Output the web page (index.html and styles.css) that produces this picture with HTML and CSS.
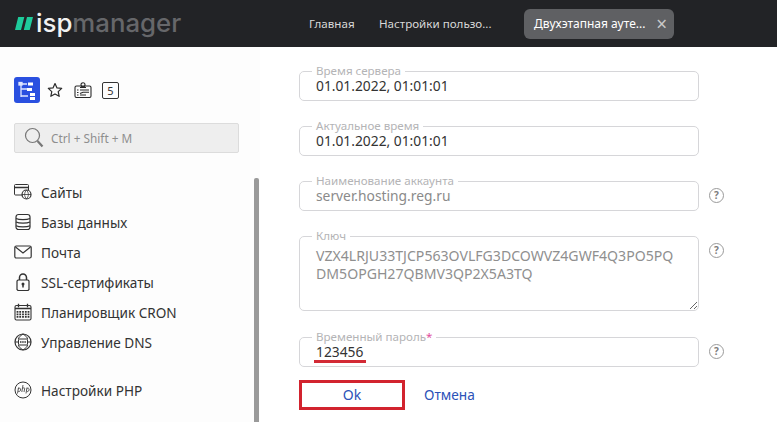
FILE: index.html
```html
<!DOCTYPE html>
<html lang="ru">
<head>
<meta charset="utf-8">
<title>ispmanager</title>
<link rel="stylesheet" href="styles.css">
</head>
<body>
<header class="topbar">
  <div class="logo">
    <svg class="logo-mark" width="18" height="13" viewBox="0 0 18 13"><path d="M3.200 0H9.300L6 13H0zM12 0H18L14.700 13H8.800z" fill="#1ecb9b"/></svg>
    <span class="logo-text"><span class="logo-isp">isp</span>manager</span>
  </div>
  <nav class="tabs">
    <a class="tab tab-home">Главная</a>
    <a class="tab tab-settings">Настройки пользо...</a>
    <a class="tab tab-active"><span>Двухэтапная ауте...</span><span class="close">×</span></a>
  </nav>
</header>
<div class="body">
  <aside class="sidebar">
    <div class="tools">
      <span class="tool-active">
        <svg width="26" height="26" viewBox="0 0 26 26" fill="none" stroke="#dfe6ff" stroke-width="1.300"><path d="M6 7h7M7 7v13M7 12h6M7 19h7"/><rect x="5" y="5.500" width="3" height="2.500" fill="#dfe6ff"/><rect x="14" y="5.500" width="5" height="3" fill="#fff" stroke="none"/><rect x="13" y="11" width="5" height="3" fill="#fff" stroke="none"/><rect x="16" y="16" width="5" height="3" fill="#fff" stroke="none"/><rect x="16" y="20" width="5" height="3" fill="#fff" stroke="none"/></svg>
      </span>
      <svg class="tool-star" width="16" height="16" viewBox="0 0 16 16" fill="none" stroke="#2a2a2a" stroke-width="1.200"><path d="M8 1.500l2 4.400 4.700.5-3.500 3.200 1 4.700L8 11.900l-4.200 2.400 1-4.700L1.300 6.400l4.700-.5z" stroke-linejoin="round"/></svg>
      <svg class="tool-card" width="18" height="16" viewBox="0 0 18 16" fill="none" stroke="#2a2a2a" stroke-width="1.100"><rect x="1" y="4" width="16" height="11.500" rx="1.500"/><circle cx="9" cy="2.800" r="2"/><path d="M6 5.500h6M3 8h1.500M6 8h9M3 10.500h1.500M6 11.500l3-1.200h6M3 13h1.500M6 13h6"/></svg>
      <span class="tool-count">5</span>
    </div>
    <div class="search">
      <svg width="20" height="22" viewBox="0 0 20 22" fill="none" stroke="#777"><circle cx="8.500" cy="8.500" r="7" stroke-width="1.200"/><path d="M13.500 14l5 5.500" stroke-width="2.200"/></svg>
      <span>Ctrl + Shift + M</span>
    </div>
    <ul class="menu">
      <li class="menu-item">
        <svg width="18" height="18" viewBox="0 0 18 18" fill="none" stroke="#333"><path d="M9 12H1.500a1 1 0 0 1-1-1V2.500a1 1 0 0 1 1-1h12a1 1 0 0 1 1 1V7"/><path d="M.5 4.500h14" stroke-width="1.500"/><circle cx="12.500" cy="11.500" r="4.500" stroke-width="1.200"/><path d="M8 11.500h9M12.500 7c-2.500 3-2.500 6 0 9M12.500 7c2.500 3 2.500 6 0 9" stroke-width=".8"/></svg>
        <span>Сайты</span>
      </li>
      <li class="menu-item">
        <svg width="18" height="18" viewBox="0 0 18 18" fill="none" stroke="#333" stroke-width="1.200"><rect x="2" y="1.500" width="14" height="15" rx="2.500"/><path d="M2 5.500c3 1.500 11 1.500 14 0M2 9c3 1.500 11 1.500 14 0M2 12.800c3 1.500 11 1.500 14 0"/></svg>
        <span>Базы данных</span>
      </li>
      <li class="menu-item">
        <svg width="18" height="18" viewBox="0 0 18 18" fill="none" stroke="#333" stroke-width="1.200"><rect x=".8" y="3" width="16.400" height="12" rx="1.500"/><path d="M1.500 4l7.500 6 7.500-6"/></svg>
        <span>Почта</span>
      </li>
      <li class="menu-item">
        <svg width="18" height="18" viewBox="0 0 18 18" fill="none" stroke="#333" stroke-width="1.200"><path d="M5.500 7V4.500a3.500 3.500 0 0 1 7 0V7" stroke-width="1.500"/><path d="M4 7h10l1 1v8.500l-1 1H4l-1-1V8z"/><circle cx="9" cy="11" r="1.500" fill="#333" stroke="none"/><path d="M9 11v3.500" stroke-width="1.500"/></svg>
        <span>SSL-сертификаты</span>
      </li>
      <li class="menu-item">
        <svg width="18" height="18" viewBox="0 0 18 18" fill="none" stroke="#333" stroke-width="1.100"><rect x="1" y="2.500" width="16" height="14.500" rx="1.500"/><path d="M4.500 .8v3.500M13.500 .8v3.500M1 5.500h16" stroke-width="1.300"/><path d="M3.500 8v7.500M6.200 8v7.500M9 8v7.500M11.800 8v7.500M14.500 8v7.500" stroke-width="1.800" stroke-dasharray="1.700 .8"/></svg>
        <span>Планировщик CRON</span>
      </li>
      <li class="menu-item">
        <svg width="18" height="18" viewBox="0 0 18 18" fill="none" stroke="#333" stroke-width="1"><circle cx="9" cy="9" r="8" stroke-width="1.200"/><path d="M1 9h3M14 9h3M9 1c-3 2-4.500 3.500-4.500 5M9 1c3 2 4.500 3.500 4.500 5M9 17c-3-2-4.500-3.500-4.500-5M9 17c3-2 4.500-3.500 4.500-5"/><rect x="4.500" y="6" width="9" height="6" rx="1"/><path d="M6 9h6" stroke-width="1.600" stroke-dasharray="1.500 .7"/></svg>
        <span>Управление DNS</span>
      </li>
      <li class="menu-item menu-item-php">
        <svg width="18" height="18" viewBox="0 0 18 18" fill="none" stroke="#333" stroke-width="1"><circle cx="9" cy="9" r="8"/><path d="M3.500 12.500l1-6M4.200 8c1-1.500 2.800-1 2.400 1-.3 1.500-2 2-2.500 1M7.800 11l1.200-7M8.600 7.500c1-1 2.400-1 2 .5l-.6 3M12 12.500l1-6M12.700 8c1-1.500 2.800-1 2.400 1-.3 1.500-2 2-2.500 1" stroke-width=".8"/></svg>
        <span>Настройки PHP</span>
      </li>
    </ul>
    <span class="scrollbar"></span>
  </aside>
  <main class="main">
    <form class="form">
      <div class="row row-1">
        <fieldset class="field"><legend>Время сервера</legend><div class="value">01.01.2022, 01:01:01</div></fieldset>
      </div>
      <div class="row row-2">
        <fieldset class="field"><legend>Актуальное время</legend><div class="value">01.01.2022, 01:01:01</div></fieldset>
      </div>
      <div class="row row-3">
        <fieldset class="field"><legend>Наименование аккаунта</legend><div class="value value-muted">server.hosting.reg.ru</div></fieldset>
        <span class="help">?</span>
      </div>
      <div class="row row-4">
        <fieldset class="field"><legend>Ключ</legend><textarea class="key" readonly>VZX4LRJU33TJCP563OVLFG3DCOWVZ4GWF4Q3PO5PQ
DM5OPGH27QBMV3QP2X5A3TQ</textarea></fieldset>
        <span class="help">?</span>
      </div>
      <div class="row row-5">
        <fieldset class="field"><legend>Временный пароль<span class="req">*</span></legend><div class="value value-marked">123456</div></fieldset>
        <span class="help">?</span>
      </div>
      <div class="actions">
        <button class="ok" type="button">Ok</button>
        <a class="cancel">Отмена</a>
      </div>
    </form>
  </main>
</div>
</body>
</html>
```
FILE: styles.css
```css
* { box-sizing: border-box; }
html, body { height: 100%; }
body {
  margin: 0;
  height: 422px;
  overflow: hidden;
  background: #fff;
  color: #333;
  font-family: "Noto Sans", "Open Sans", sans-serif;
  display: flex;
  flex-direction: column;
}

/* Header */
.topbar {
  flex: 0 0 47px;
  background: #222326;
  display: flex;
  align-items: center;
}
.logo {
  width: 309px;
  padding-left: 15px;
  display: flex;
  align-items: center;
  gap: 3px;
}
.logo-text {
  font-family: Inter, sans-serif;
  font-size: 25.800px;
  font-weight: 500;
  line-height: 30px;
  color: #66676a;
  position: relative;
  top: -1px;
}
.logo-isp { color: #f2f2f2; }
.tabs { display: flex; align-items: center; }
.tab {
  font-size: 11.600px;
  line-height: 16px;
  color: #d8d8d8;
}
.tab-home { width: 70px; }
.tab-settings { width: 145px; }
.tab-active {
  width: 150px;
  height: 30px;
  padding: 0 7px 0 10px;
  background: #5f6063;
  border-radius: 6px;
  font-size: 12px;
  color: #fff;
  display: flex;
  align-items: center;
  justify-content: space-between;
}
.close { color: #c9c9c9; font-size: 19px; }

/* Body */
.body { flex: 1; min-height: 0; display: flex; }
.sidebar {
  position: relative;
  flex: 0 0 260px;
  padding: 30px 0 0 14px;
  background: #fdfdfd;
}
.tools { display: flex; align-items: center; height: 26px; }
.tool-active {
  width: 26px;
  height: 26px;
  background: #2a50e0;
  border-radius: 3px;
  display: block;
}
.tool-active svg { display: block; }
.tool-star { margin-left: 7px; }
.tool-card { margin-left: 11px; }
.tool-count {
  margin-left: 10px;
  width: 17px;
  height: 17px;
  border: 1px solid #333;
  border-radius: 2px;
  font-size: 11px;
  line-height: 15px;
  text-align: center;
}
.search {
  margin-top: 20px;
  width: 225px;
  height: 30px;
  padding-left: 9px;
  display: flex;
  align-items: center;
  gap: 7px;
  background: #eeeeee;
  border: 1px solid #dcdcdc;
  border-radius: 2px;
  font-size: 11.800px;
  color: #8e8e8e;
}
.search svg { flex: none; }
.menu { list-style: none; margin: 24px 0 0; padding: 0; }
.menu-item {
  height: 30px;
  display: flex;
  align-items: center;
  gap: 9px;
  font-size: 13.600px;
  color: #333;
}
.menu-item svg { flex: none; }
.menu-item-php { margin-top: 18px; }
.scrollbar {
  position: absolute;
  left: 254px;
  top: 131px;
  bottom: 0;
  width: 5px;
  background: #9a9a9a;
  border-radius: 2px 2px 0 0;
}

/* Form */
.main { flex: 1; min-width: 0; padding: 0 0 0 39px; }
.form { display: flex; flex-direction: column; }
.row { display: flex; align-items: flex-start; gap: 10px; }
.row-1 { margin-top: 17px; }
.row-2, .row-3 { margin-top: 18px; }
.row-4 { margin-top: 18px; }
.row-5 { margin-top: 19px; }
.field {
  margin: 0;
  padding: 0;
  width: 400px;
  flex: none;
  border: 1px solid #d6d6d9;
  border-radius: 5px;
  min-inline-size: 0;
}
.field legend {
  margin-left: 12px;
  padding: 0 4px;
  font-size: 11.600px;
  line-height: 14px;
  color: #b4b4b6;
}
.req { color: #e04fa0; }
.value {
  height: 22px;
  padding-left: 16px;
  font-size: 13.800px;
  line-height: 16px;
  color: #333;
}
.value-muted { color: #8a8a8a; }
.value-marked { position: relative; }
.value-marked::after {
  content: "";
  position: absolute;
  left: 14px;
  top: 16px;
  width: 52px;
  height: 3px;
  background: #d32a35;
}
.key {
  display: block;
  width: 100%;
  height: 67px;
  margin: 0;
  padding: 4px 6px 0 16px;
  border: 0;
  outline: 0;
  background: transparent;
  border-radius: 5px;
  font: 14.100px/18px "Noto Sans", "Open Sans", sans-serif;
  color: #8f8f8f;
  overflow: hidden;
  white-space: pre;
}
.help {
  flex: none;
  width: 15px;
  height: 15px;
  margin-top: 14px;
  border: 1px solid #9a9a9a;
  border-radius: 50%;
  font-size: 10px;
  font-weight: 700;
  line-height: 13px;
  text-align: center;
  color: #7d7d7d;
}
.actions {
  margin-top: 13px;
  display: flex;
  align-items: center;
  gap: 19px;
}
.ok {
  width: 106px;
  height: 30px;
  background: #fff;
  border: 3px solid #d2232e;
  border-radius: 0;
  font: 14px/18px "Noto Sans", "Open Sans", sans-serif;
  color: #2c52b8;
}
.cancel { font-size: 13.700px; line-height: 18px; margin-top: -1px; color: #2c52b8; }
```
